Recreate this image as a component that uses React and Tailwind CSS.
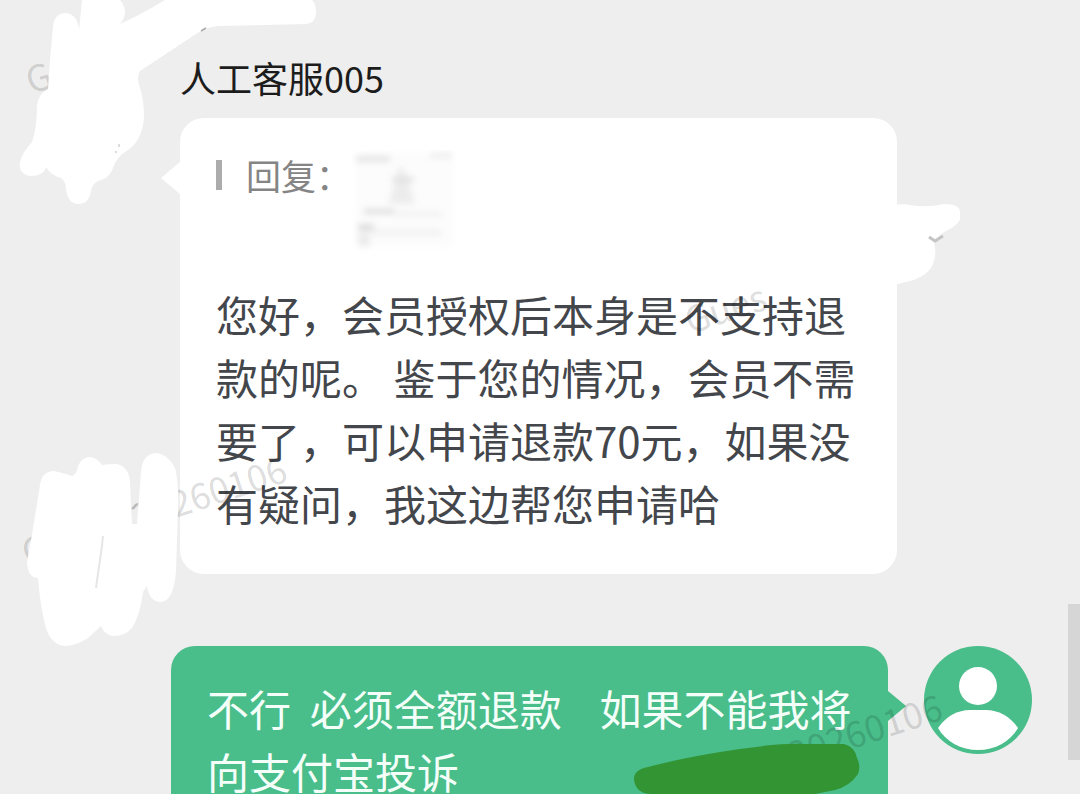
const watermarks = [
    { id: 'top', text: 'G', position: 'left-[26px] top-[61px]' },
    { id: 'reply', text: 'Gues', position: 'left-[685px] top-[301px]' },
    { id: 'left', text: 'Guest_20260106', position: 'left-[22px] top-[533px]' },
    { id: 'bottom', text: '20260106', position: 'left-[788px] top-[735px]' },
];

function Watermark({ text, position }) {
    return (
        <span
            aria-hidden="true"
            className={`absolute ${position} origin-left -rotate-18 whitespace-nowrap text-4xl leading-9 text-black/15 pointer-events-none select-none`}
        >
            {text}
        </span>
    );
}

function QuotedImage() {
    return (
        <svg width="108" height="108" viewBox="0 0 108 108" className="shrink-0" role="img" aria-label="图片">
            <defs>
                <filter id="soft" x="-20%" y="-20%" width="140%" height="140%">
                    <feGaussianBlur stdDeviation="3" />
                </filter>
            </defs>
            <g filter="url(#soft)">
                <rect x="4" y="3" width="98" height="94" fill="#fcfcfc" />
                <rect x="4" y="6" width="34" height="6" fill="#e4e4e4" />
                <rect x="78" y="3" width="22" height="5" fill="#ececec" />
                <path d="M49 14 L56 30 L63 54 H37 L43 30 Z" fill="#ececec" />
                <rect x="40" y="27" width="22" height="5" fill="#e0e0e0" />
                <rect x="12" y="59" width="30" height="5" fill="#dcdcdc" />
                <rect x="42" y="62" width="48" height="4" fill="#eeeeee" />
                <rect x="6" y="74" width="16" height="7" fill="#dcdcdc" />
                <rect x="20" y="80" width="70" height="5" fill="#f0f0f0" />
                <rect x="6" y="84" width="12" height="12" fill="#ebebeb" />
            </g>
        </svg>
    );
}

function Avatar() {
    return (
        <svg width="108" height="108" viewBox="0 0 108 108" className="shrink-0" role="img" aria-label="我">
            <circle cx="54" cy="54" r="54" fill="#49bd8a" />
            <circle cx="54" cy="40" r="19" fill="#fff" />
            <path d="M14 82 C22 70 34 64 46 64 H62 C74 64 86 70 94 82 C86 96 71 104 54 104 C37 104 22 96 14 82 Z" fill="#fff" />
        </svg>
    );
}

function Scribbles() {
    return (
        <div aria-hidden="true" className="pointer-events-none">
            <svg className="absolute left-0 top-0" width="320" height="210" viewBox="0 0 320 210">
                <path
                    fill="#fff"
                    d="M53 27 Q54 13 66 13 Q78 15 79 30 L82 0 H120 Q130 12 120 24 Q140 15 165 0 H312 Q316 4 316 12 Q316 23 306 24 L218 26 Q206 27 196 34 L140 71 Q136 78 140 88 Q144 100 144 118 Q142 142 125 152 Q116 158 113 168 Q109 179 98 181 Q92 184 91 191 Q89 204 78 204 Q67 203 66 188 Q65 178 58 177 Q50 174 46 167 Q44 176 30 176 Q18 174 20 162 Q22 153 32 142 Q37 128 37 106 Q38 94 48 89 L50 60 Z"
                />
                <path d="M201 31 L206 28" stroke="#aaa" strokeWidth="1.5" />
                <path d="M119 144 V147 M115 152 H117" stroke="#bbb" strokeWidth="1" />
            </svg>
            <svg className="absolute left-0 top-[440px]" width="190" height="210" viewBox="0 0 190 210">
                <path
                    fill="#fff"
                    d="M40 45 Q42 31 54 31 Q64 33 72 36 Q77 34 78 26 Q82 17 90 17 Q98 18 102 25 Q108 24 117 24 Q129 27 130 42 L131 66 L132 84 L137 84 L141 32 Q142 14 156 13 Q168 14 175 28 Q179 42 178 70 L176 130 Q174 162 160 162 Q149 161 147 146 L143 152 Q140 176 132 188 Q124 197 112 196 Q104 194 101 186 L88 198 Q76 206 64 206 Q51 204 46 188 Q40 166 38 138 Q28 138 27 122 Q32 96 36 70 Z"
                />
                <path d="M103 96 L102 106 L96 148" fill="none" stroke="#e6e6e6" strokeWidth="2" />
                <path d="M132 69 L137 64" stroke="#b8b8b8" strokeWidth="2" />
            </svg>
            <svg className="absolute left-[760px] top-[190px]" width="210" height="110" viewBox="0 0 210 110">
                <path
                    fill="#fff"
                    d="M10 80 L120 20 Q140 12 150 15 Q166 18 184 14 Q200 14 200 22 V30 Q196 36 188 40 Q180 43 174 52 Q177 64 173 74 Q168 86 150 91 L130 96 L60 100 L14 90 Z"
                />
                <path d="M169 47 L175 51 L183 46" fill="none" stroke="#c4c4c4" strokeWidth="3" />
            </svg>
            <svg className="absolute left-[630px] top-[740px]" width="235" height="54" viewBox="0 0 235 54">
                <path
                    fill="#339433"
                    d="M4 40 Q3 30 18 27 Q60 16 110 9 Q150 3 175 4 H214 Q225 7 227 18 Q231 26 228 34 Q220 46 205 50 L185 54 H22 Q6 54 4 40 Z"
                />
            </svg>
        </div>
    );
}

export default function App() {
    return (
        <main className="relative h-screen overflow-hidden bg-[#eeeeee] font-['Noto_Sans_CJK_SC','Noto_Sans',sans-serif]">
            <section className="pt-13 pl-[180px] pr-[183px]">
                <h2 className="mb-4 text-[36px] leading-[50px] font-normal text-[#1c1c1c]">人工客服005</h2>

                <div className="relative rounded-3xl bg-white px-9 pt-8 pb-10">
                    <svg className="absolute right-full top-[44px]" width="19" height="32" viewBox="0 0 19 32">
                        <path d="M19 0 L0 16 L19 32 Z" fill="#fff" />
                    </svg>
                    <blockquote className="mb-6 flex items-start text-[35px] leading-[50px] text-[#858585]">
                        <span className="mt-[10px] mr-6 h-[30px] w-[6px] shrink-0 bg-[#acacac]" />
                        <span className="w-[106px]">回复：</span>
                        <QuotedImage />
                    </blockquote>
                    <p className="text-[42px] leading-[63px] text-[#43464b]">
                        您好，会员授权后本身是不支持退款的呢。 鉴于您的情况，会员不需要了，可以申请退款70元，如果没有疑问，我这边帮您申请哈
                    </p>
                </div>
            </section>

            <section className="mt-[72px] flex items-start gap-9 pl-[171px] pr-12">
                <div className="relative flex-1 rounded-3xl bg-[#49bd8a] px-9 py-[30px]">
                    <svg className="absolute left-full top-[45px]" width="18" height="30" viewBox="0 0 18 30">
                        <path d="M0 0 L18 15 L0 30 Z" fill="#49bd8a" />
                    </svg>
                    <p className="whitespace-pre-wrap text-[42px] leading-[63px] text-[#f4fffa]">
                        {'不行  必须全额退款    如果不能我将向支付宝投诉'}
                    </p>
                </div>
                <Avatar />
            </section>

            {watermarks.map(({ id, text, position }) => (
                <Watermark key={id} text={text} position={position} />
            ))}
            <Scribbles />

            <div className="absolute right-0 top-[604px] h-[156px] w-3 bg-[#d6d6d6]" />
        </main>
    );
}
